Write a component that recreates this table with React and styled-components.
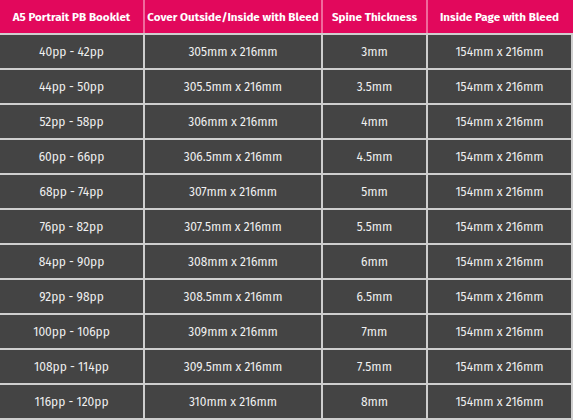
import React from "react";
import styled, { createGlobalStyle } from "styled-components";

const GlobalStyle = createGlobalStyle`
  html, body {
    margin: 0;
    padding: 0;
    background: #ffffff;
  }
`;

const Table = styled.table`
  border-collapse: collapse;
  width: 572px;
  table-layout: fixed;
  font-family: "Fira Sans", "Open Sans", "Noto Sans", sans-serif;
`;

const Col = styled.col`
  width: ${(p) => p.$w}px;
`;

const HeadCell = styled.th`
  height: 33px;
  padding: 0;
  background-color: #e2085c;
  color: #ffffff;
  font-size: 11.6px;
  font-weight: 700;
  text-align: center;
  border-left: 2px solid #f06a9c;
  border-bottom: 2px solid #cfcfcf;

  &:first-child {
    border-left: none;
  }
  &:last-child {
    border-right: 2px solid #e2085c;
  }
`;

const Cell = styled.td`
  height: 33px;
  padding: 0;
  background-color: #444444;
  color: #f0f0f0;
  font-size: 12px;
  text-align: center;
  border-left: 2px solid #cfcfcf;
  border-bottom: 2px solid #cfcfcf;

  &:first-child {
    border-left: none;
  }
  &:last-child {
    border-right: 2px solid #cfcfcf;
  }
`;

const headers = [
  "A5 Portrait PB Booklet",
  "Cover Outside/Inside with Bleed",
  "Spine Thickness",
  "Inside Page with Bleed",
];

const rows = [
  ["40pp - 42pp", "305mm x 216mm", "3mm"],
  ["44pp - 50pp", "305.5mm x 216mm", "3.5mm"],
  ["52pp - 58pp", "306mm x 216mm", "4mm"],
  ["60pp - 66pp", "306.5mm x 216mm", "4.5mm"],
  ["68pp - 74pp", "307mm x 216mm", "5mm"],
  ["76pp - 82pp", "307.5mm x 216mm", "5.5mm"],
  ["84pp - 90pp", "308mm x 216mm", "6mm"],
  ["92pp - 98pp", "308.5mm x 216mm", "6.5mm"],
  ["100pp - 106pp", "309mm x 216mm", "7mm"],
  ["108pp - 114pp", "309.5mm x 216mm", "7.5mm"],
  ["116pp - 120pp", "310mm x 216mm", "8mm"],
];

export default function App() {
  return (
    <>
      <GlobalStyle />
      <Table>
        <colgroup>
          <Col $w={144} />
          <Col $w={178} />
          <Col $w={105} />
          <Col $w={145} />
        </colgroup>
        <thead>
          <tr>
            {headers.map((h) => (
              <HeadCell key={h}>{h}</HeadCell>
            ))}
          </tr>
        </thead>
        <tbody>
          {rows.map((r) => (
            <tr key={r[0]}>
              <Cell>{r[0]}</Cell>
              <Cell>{r[1]}</Cell>
              <Cell>{r[2]}</Cell>
              <Cell>154mm x 216mm</Cell>
            </tr>
          ))}
        </tbody>
      </Table>
    </>
  );
}
